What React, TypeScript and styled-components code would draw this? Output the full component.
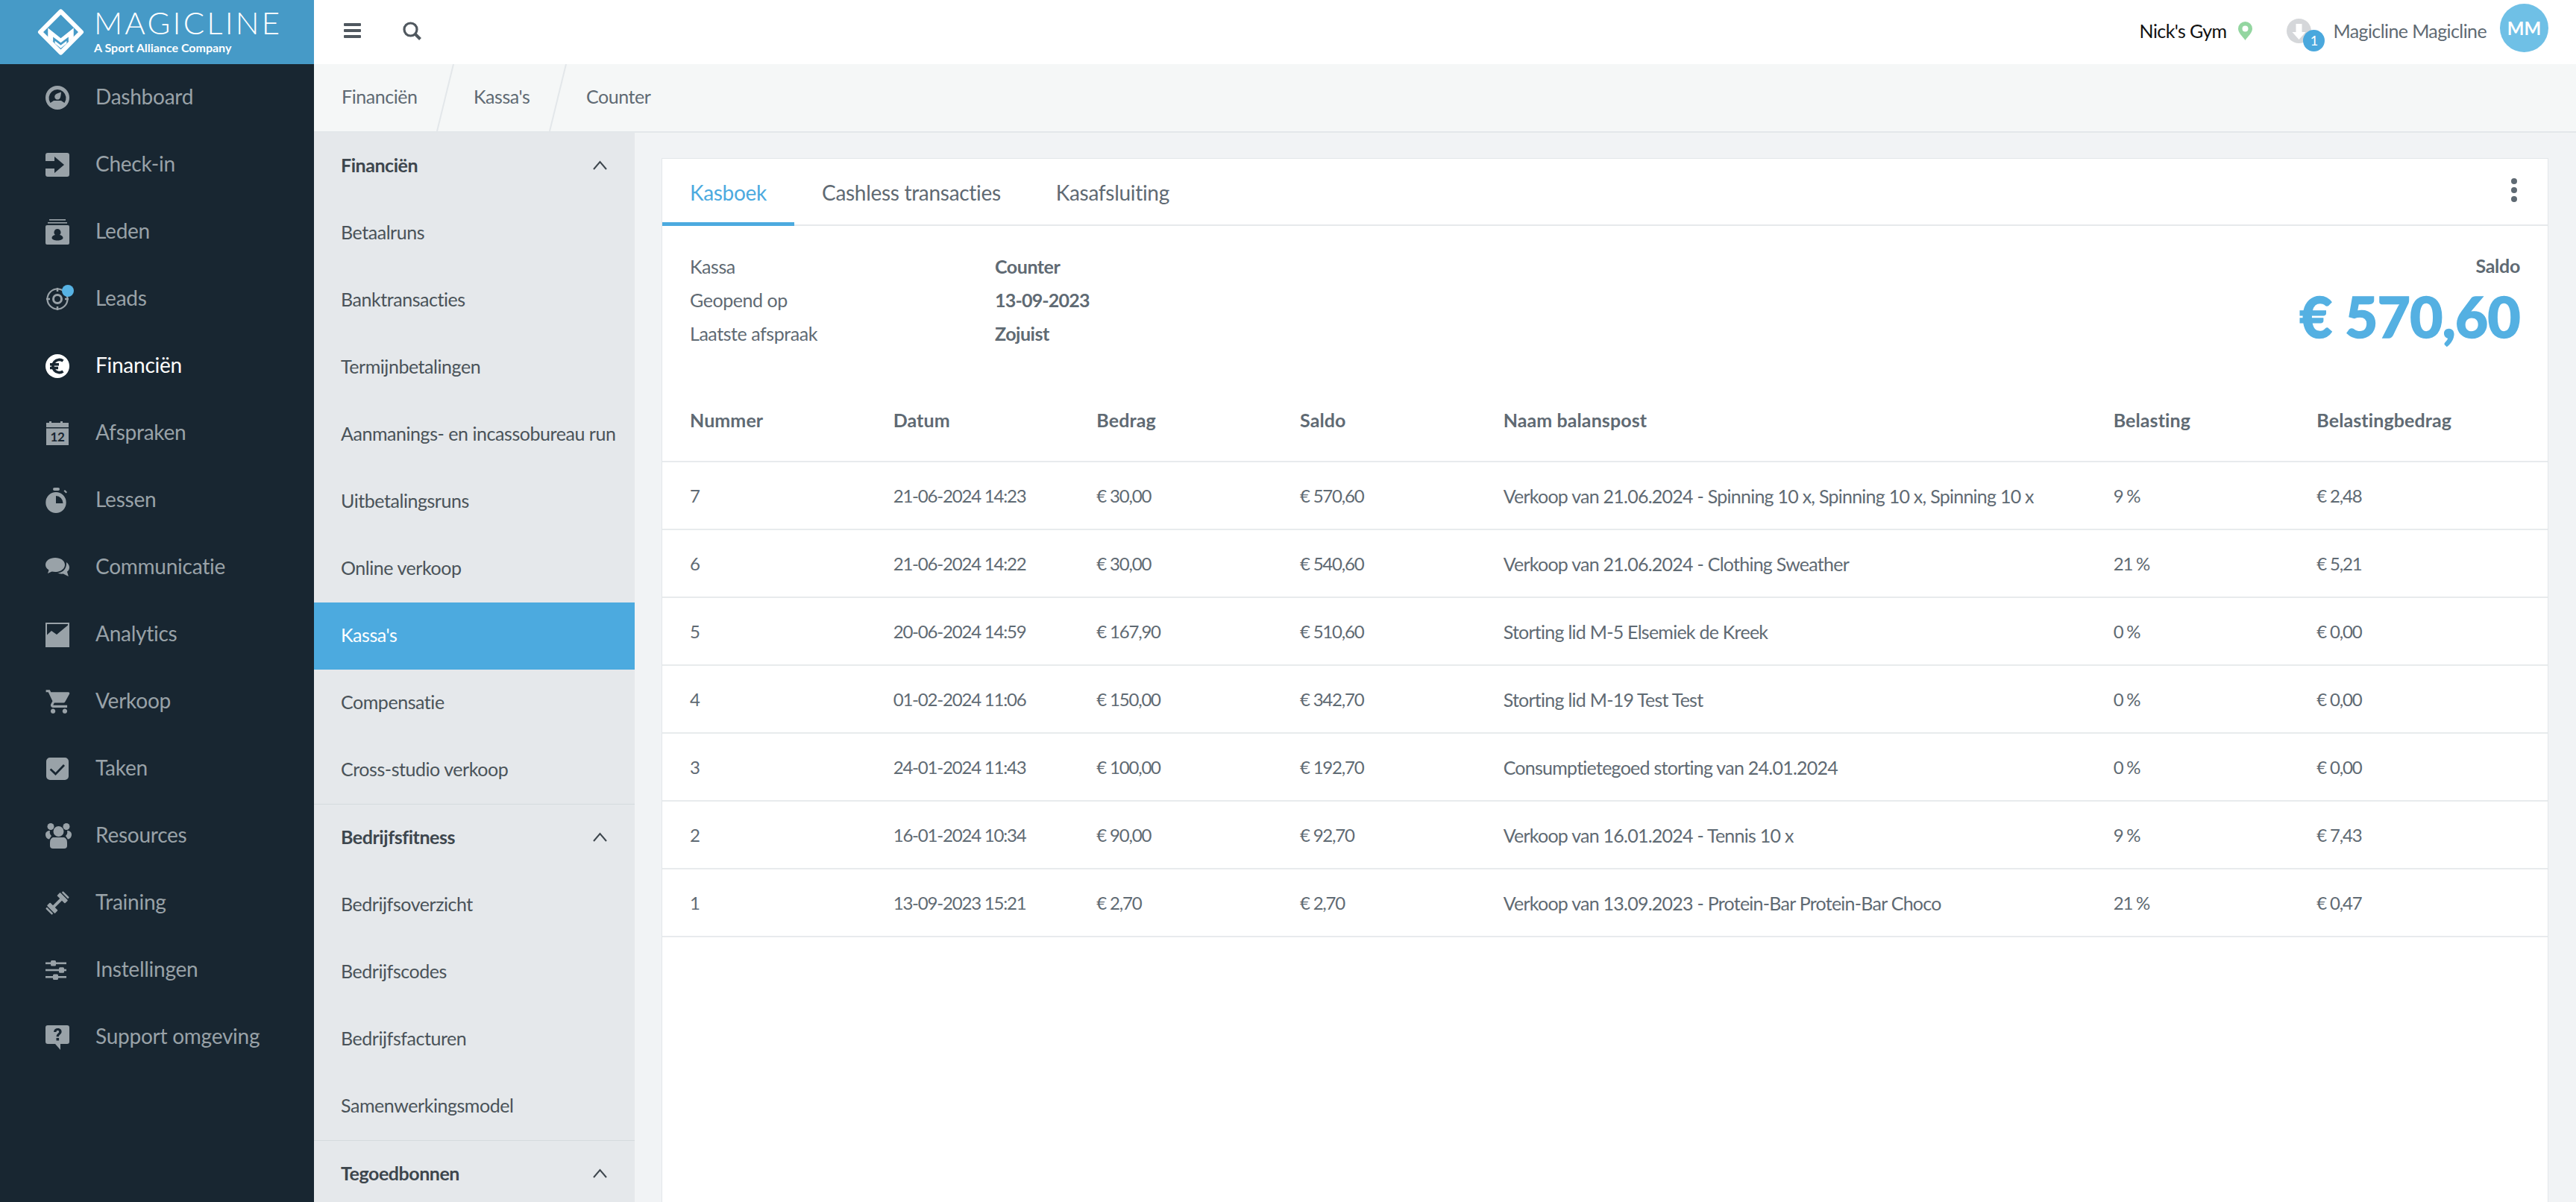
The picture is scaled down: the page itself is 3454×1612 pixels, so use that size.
import React from "react";
import styled, { createGlobalStyle } from "styled-components";
import { MdShoppingCart } from "react-icons/md";

const Global = createGlobalStyle`
  html, body { margin: 0; padding: 0; height: 100%; background: #f1f3f5; }
  #root { height: 100%; }
  * { box-sizing: border-box; }
  body { font-family: "Lato", "Noto Sans", sans-serif; overflow: hidden; }
`;

const Shell = styled.div`
  display: grid;
  grid-template-columns: 421px 1fr;
  width: 3454px;
  height: 1612px;
  overflow: hidden;
`;
const Side = styled.aside`
  background: #182631;
  display: flex;
  flex-direction: column;
`;
const Brand = styled.div`
  height: 86px;
  background: #469ac7;
  display: flex;
  align-items: center;
  padding-left: 50px;
  gap: 13px;
  color: #fff;
`;
const BrandText = styled.div`
  display: flex;
  flex-direction: column;
  line-height: 1;
`;
const BrandName = styled.span`
  font-size: 42px;
  font-weight: 300;
  letter-spacing: 3.2px;
  line-height: 42px;
  margin-top: -3px;
`;
const BrandSub = styled.span`
  font-size: 16px;
  font-weight: 700;
  line-height: 20px;
  margin-top: 3px;
`;
const Nav = styled.nav`
  display: flex;
  flex-direction: column;
`;
const NavItem = styled.a<{ $on?: boolean }>`
  height: 90px;
  display: flex;
  align-items: center;
  padding-left: 61px;
  gap: 35px;
  font-size: 28px;
  letter-spacing: -0.25px;
  color: ${(p) => (p.$on ? "#ffffff" : "#99a2a8")};
`;
const NavLabel = styled.span`
  margin-bottom: 4px;
`;
const NavIcon = styled.span`
  position: relative;
  width: 32px;
  height: 34px;
  display: flex;
  align-items: center;
  justify-content: center;
  svg { display: block; width: 32px; height: 34px; flex: none; }
`;
const WideSvg = styled.svg`
  && { width: 35px; margin-left: 3px; }
`;
const Cart = styled(MdShoppingCart)`
  && { width: 38px; height: 38px; margin-left: 3px; }
`;
const Dot = styled.span`
  position: absolute;
  width: 16px;
  height: 16px;
  border-radius: 50%;
  background: #57b3e4;
  top: -2px;
  right: -6px;
`;
const Main = styled.div`
  display: flex;
  flex-direction: column;
  min-width: 0;
`;
const Top = styled.header`
  height: 86px;
  background: #fff;
  display: flex;
  align-items: center;
  padding: 0 37px 4px 40px;
`;
const TopBtn = styled.span`
  display: flex;
  color: #50585f;
  margin-right: 56px;
  svg { display: block; }
`;
const Gym = styled.span`
  margin-left: auto;
  font-size: 25px;
  letter-spacing: -0.6px;
  color: #111;
`;
const Pin = styled.span`
  display: flex;
  margin: 0 46px 0 16px;
`;
const Download = styled.span`
  position: relative;
  width: 33px;
  height: 33px;
  margin-right: 29px;
  svg { display: block; }
`;
const Badge = styled.span`
  position: absolute;
  left: 22px;
  top: 15px;
  width: 29px;
  height: 29px;
  border-radius: 50%;
  background: #4aa8dd;
  color: #fff;
  font-size: 18px;
  display: flex;
  align-items: center;
  justify-content: center;
`;
const UserName = styled.span`
  font-size: 25px;
  letter-spacing: -0.6px;
  color: #5f6a73;
`;
const Avatar = styled.span`
  width: 65px;
  height: 65px;
  border-radius: 50%;
  background: #6fc0e6;
  color: #fff;
  font-weight: 700;
  font-size: 24px;
  display: flex;
  align-items: center;
  justify-content: center;
  margin: -8px 0 0 18px;
`;
const Crumbs = styled.div`
  height: 92px;
  background: #f5f7f7;
  border-bottom: 2px solid #e3e7ea;
  display: flex;
  align-items: center;
  font-size: 25px;
  letter-spacing: -0.45px;
  color: #5f6a73;
`;
const Crumb = styled.span<{ $w: number; $last?: boolean }>`
  position: relative;
  width: ${(p) => p.$w}px;
  padding: 0 0 4px 37px;
  height: 100%;
  display: flex;
  align-items: center;
  svg {
    position: absolute;
    right: -12px;
    top: 0;
    display: ${(p) => (p.$last ? "none" : "block")};
  }
`;
const Body = styled.div`
  flex: 1;
  display: flex;
  min-height: 0;
`;
const Sub = styled.div`
  width: 430px;
  background: #e5e8eb;
  overflow: hidden;
  flex: none;
`;
const SubGroup = styled.div`
  border-bottom: 1px solid #d5dadd;
`;
const SubHead = styled.div`
  height: 90px;
  padding: 0 37px 4px 36px;
  display: flex;
  align-items: center;
  justify-content: space-between;
  font-size: 25px;
  font-weight: 700;
  letter-spacing: -0.45px;
  color: #3d464d;
`;
const SubItem = styled.div<{ $on?: boolean }>`
  height: 90px;
  padding: 0 0 4px 36px;
  display: flex;
  align-items: center;
  font-size: 25px;
  letter-spacing: -0.45px;
  white-space: nowrap;
  color: ${(p) => (p.$on ? "#fff" : "#4a5359")};
  background: ${(p) => (p.$on ? "#4caadf" : "transparent")};
`;
const Content = styled.main`
  flex: 1;
  padding: 34px 37px 0 36px;
  min-width: 0;
`;
const Card = styled.section`
  background: #fff;
  border: 1px solid #e3e7ea;
  border-bottom: 0;
  height: 100%;
`;
const Tabs = styled.div`
  height: 90px;
  border-bottom: 2px solid #e6e9ec;
  display: flex;
  align-items: stretch;
  position: relative;
`;
const Tab = styled.a<{ $on?: boolean }>`
  padding: 5px 37px 0;
  display: flex;
  align-items: center;
  font-size: 28px;
  letter-spacing: -0.3px;
  color: ${(p) => (p.$on ? "#4caadf" : "#5f6a73")};
  margin-bottom: -2px;
  border-bottom: 5px solid ${(p) => (p.$on ? "#4caadf" : "transparent")};
`;
const Kebab = styled.span`
  position: absolute;
  right: 41px;
  top: 26px;
  display: flex;
  flex-direction: column;
  gap: 4px;
  i {
    display: block;
    width: 8px;
    height: 8px;
    border-radius: 50%;
    background: #5f6a73;
  }
`;
const Summary = styled.div`
  display: flex;
  justify-content: space-between;
  padding: 31px 37px 0;
  height: 205px;
`;
const Facts = styled.dl`
  margin: 0;
  display: grid;
  grid-template-columns: 409px auto;
  grid-auto-rows: 45px;
  align-items: center;
  font-size: 25px;
  letter-spacing: -0.45px;
  color: #5f6a73;
  dt { font-weight: 400; }
  dd { margin: 0; font-weight: 700; }
`;
const FactNumber = styled.dd`
  && { letter-spacing: -0.8px; }
`;
const Balance = styled.div`
  text-align: right;
  color: #5f6a73;
  font-size: 25px;
  font-weight: 700;
  letter-spacing: -0.3px;
  line-height: 45px;
`;
const Amount = styled.div`
  font-size: 76px;
  line-height: 90px;
  font-weight: 900;
  letter-spacing: -0.6px;
  color: #54b0e2;
  -webkit-text-stroke: 1.5px #54b0e2;
`;
const Row = styled.div<{ $head?: boolean }>`
  display: grid;
  grid-template-columns: 1fr 1fr 1fr 1fr 3fr 1fr 1fr;
  padding: 0 37px;
  align-items: center;
  height: ${(p) => (p.$head ? "112px" : "91px")};
  border-bottom: 2px solid #e8ebed;
  font-size: 25px;
  letter-spacing: ${(p) => (p.$head ? "0.1px" : "-0.75px")};
  font-weight: ${(p) => (p.$head ? 700 : 400)};
  color: #5f6a73;
  white-space: nowrap;
`;
const NumCell = styled.span`
  font-size: 24px;
  letter-spacing: -1.2px;
`;

const Dashboard = () => (
  <svg viewBox="0 0 32 34" fill="currentColor">
    <circle cx="16" cy="17" r="16" />
    <path fill="#182631" d="M6.500 24A11.500 11.500 0 1 1 25.500 24L21 21H11z" />
    <path d="M21 9.500c-.2 3.500-.6 5.500-1.200 7.500a3.900 3.900 0 1 1-6.300-4.200C15.200 11.400 18 10.500 21 9.500z" />
  </svg>
);
const CheckIn = () => (
  <svg viewBox="0 0 32 34" fill="currentColor">
    <path d="M3 1h26a3 3 0 0 1 3 3v26a3 3 0 0 1-3 3H3a3 3 0 0 1-3-3v-8h12v6l13-11L12 6v6H0V4a3 3 0 0 1 3-3z" />
  </svg>
);
const Members = () => (
  <svg viewBox="0 0 32 34" fill="currentColor">
    <rect x="5" y="0" width="22" height="1.600" />
    <rect x="3" y="4" width="26" height="1.600" />
    <path fillRule="evenodd" d="M2 8h28a2 2 0 0 1 2 2v22a2 2 0 0 1-2 2H2a2 2 0 0 1-2-2V10a2 2 0 0 1 2-2zM16 13a4.600 4.600 0 0 0-3 8c-2.500.6-4.500 2-4.500 4 0 2.200 3.500 3.500 7.500 3.500s7.500-1.300 7.500-3.500c0-2-2-3.400-4.500-4a4.600 4.600 0 0 0-3-8z" />
  </svg>
);
const Leads = () => (
  <svg viewBox="0 0 32 34" fill="none" stroke="currentColor">
    <circle cx="16" cy="17" r="13.500" strokeWidth="2.200" />
    <circle cx="16" cy="17" r="5.500" strokeWidth="3" />
    <path strokeWidth="2.500" d="M16 2v5M16 27v5M1 17h5M26 17h5" />
  </svg>
);
const Euro = () => (
  <svg viewBox="0 0 32 34">
    <circle cx="16" cy="17" r="16" fill="#fff" />
    <path fill="none" stroke="#182631" strokeWidth="3.600" d="M23.500 10a8.600 8.600 0 1 0 0 14M6 14.800h12M6 19.500h11" />
  </svg>
);
const Calendar = () => (
  <svg viewBox="0 0 32 34" fill="currentColor">
    <path fillRule="evenodd" d="M1 3h4V1h3v2h12V1h3v2h8v30H1zM1 9v1.600h30V9z" />
    <text x="16" y="28" textAnchor="middle" fontSize="17" fontWeight="700" fontFamily="Lato, sans-serif" fill="#182631">12</text>
  </svg>
);
const Stopwatch = () => (
  <svg viewBox="0 0 32 34" fill="currentColor">
    <rect x="10" y="0" width="9" height="4" rx="2" />
    <path d="M26 3l3 3-1.500 1.500-3-3z" />
    <path fillRule="evenodd" d="M14 6a13.700 14 0 1 1 0 28 13.700 14 0 0 1 0-28zM14 11v10h9.500A9.600 10 0 0 0 14 11z" />
  </svg>
);
const Chat = () => (
  <svg viewBox="0 0 32 34" fill="currentColor">
    <path d="M13 4c7 0 13 3.800 13 9.500 0 5.500-6 9.500-13 9.500-1.500 0-3-.2-4.500-.5L3 25l1.500-4.500C2 18.800 0 16.500 0 13.500 0 7.800 6 4 13 4z" />
    <path d="M28 10c2.600 2 4 4 4 7 0 2.400-1.200 4.300-3 5.700l1.800 6.300-7-3.400c-2.500.3-5.300 0-8-1 6-.4 13-4.500 12.200-14.600z" />
  </svg>
);
const Chart = () => (
  <svg viewBox="0 0 32 34" fill="currentColor">
    <path fillRule="evenodd" d="M0 1h32v33H0zM2 3v14.500l6-5.500 7 5L30 4.500V3z" />
  </svg>
);
const CheckBox = () => (
  <svg viewBox="0 0 32 34" fill="currentColor">
    <path fillRule="evenodd" d="M6 2h20a5 5 0 0 1 5 5v20a5 5 0 0 1-5 5H6a5 5 0 0 1-5-5V7a5 5 0 0 1 5-5zM24 11l-10.500 11-6-5.500-1.800 2 7.800 7.500L26 13z" />
  </svg>
);
const People = () => (
  <WideSvg viewBox="0 0 35 34" fill="currentColor">
    <circle cx="7" cy="4.500" r="4.500" />
    <circle cx="28" cy="4.500" r="4.500" />
    <path d="M6 10a7 7 0 0 0 2 7l-3 4.500C2 21 0 18.500 0 15c0-3 2.500-5 6-5zM29 10a7 7 0 0 1-2 7l3 4.500c3-.5 5-3 5-6.500 0-3-2.500-5-6-5z" />
    <circle cx="17.500" cy="11" r="7" />
    <path d="M10 19h15c2.500 1 4 3 4 7v4a4 4 0 0 1-4 4H10a4 4 0 0 1-4-4v-4c0-4 1.500-6 4-7z" />
  </WideSvg>
);
const Dumbbell = () => (
  <svg viewBox="0 0 32 34" fill="currentColor">
    <g transform="translate(16 17) rotate(-45)">
      <rect x="-8" y="-2" width="16" height="4" />
      <rect x="6.500" y="-7.500" width="6" height="15" rx="1" />
      <rect x="14" y="-6" width="2.500" height="12" rx="1" />
      <rect x="-12.500" y="-7.500" width="6" height="15" rx="1" />
      <rect x="-16.500" y="-6" width="2.500" height="12" rx="1" />
    </g>
  </svg>
);
const Sliders = () => (
  <svg viewBox="0 0 32 34" fill="currentColor">
    <rect x="0" y="6.500" width="28" height="2.600" />
    <rect x="0" y="15.700" width="28" height="2.600" />
    <rect x="0" y="25" width="28" height="2.600" />
    <rect x="7" y="4" width="7" height="7.500" rx="1.500" />
    <rect x="18" y="13.300" width="7" height="7.500" rx="1.500" />
    <rect x="10" y="22.500" width="7" height="7.500" rx="1.500" />
  </svg>
);
const Help = () => (
  <svg viewBox="0 0 32 34" fill="currentColor">
    <path fillRule="evenodd" d="M3 1h26a3 3 0 0 1 3 3v19a3 3 0 0 1-3 3H20v8l-7-8H3a3 3 0 0 1-3-3V4a3 3 0 0 1 3-3zM11 10h3.400c.2-1.400 1-2 2-2s1.800.7 1.800 1.700c0 2-3.600 2.300-3.600 6.600h3.200c0-2.800 3.800-3.200 3.800-6.900 0-2.700-2.200-4.400-5.100-4.400-3 0-5.200 1.700-5.500 5zM14.500 18h3.600v3.400h-3.600z" />
  </svg>
);
const Chevron = () => (
  <svg width="19" height="13" viewBox="0 0 19 13" fill="none" stroke="#3d464d" strokeWidth="2">
    <path d="M1 12l8.500-10L18 12" />
  </svg>
);
const Slash = () => (
  <svg width="26" height="90" viewBox="0 0 26 90" fill="none" stroke="#e3e7ea" strokeWidth="2">
    <path d="M24 0L2 90" />
  </svg>
);

const nav = [
  ["Dashboard", <Dashboard />],
  ["Check-in", <CheckIn />],
  ["Leden", <Members />],
  ["Leads", <Leads />],
  ["Financiën", <Euro />],
  ["Afspraken", <Calendar />],
  ["Lessen", <Stopwatch />],
  ["Communicatie", <Chat />],
  ["Analytics", <Chart />],
  ["Verkoop", <Cart />],
  ["Taken", <CheckBox />],
  ["Resources", <People />],
  ["Training", <Dumbbell />],
  ["Instellingen", <Sliders />],
  ["Support omgeving", <Help />],
] as const;

const groups = [
  {
    title: "Financiën",
    items: ["Betaalruns", "Banktransacties", "Termijnbetalingen", "Aanmanings- en incassobureau run", "Uitbetalingsruns", "Online verkoop", "Kassa's", "Compensatie", "Cross-studio verkoop"],
  },
  { title: "Bedrijfsfitness", items: ["Bedrijfsoverzicht", "Bedrijfscodes", "Bedrijfsfacturen", "Samenwerkingsmodel"] },
  { title: "Tegoedbonnen", items: [] as string[] },
];

const head = ["Nummer", "Datum", "Bedrag", "Saldo", "Naam balanspost", "Belasting", "Belastingbedrag"];
const rows = [
  ["7", "21-06-2024 14:23", "€ 30,00", "€ 570,60", "Verkoop van 21.06.2024 - Spinning 10 x, Spinning 10 x, Spinning 10 x", "9 %", "€ 2,48"],
  ["6", "21-06-2024 14:22", "€ 30,00", "€ 540,60", "Verkoop van 21.06.2024 - Clothing Sweather", "21 %", "€ 5,21"],
  ["5", "20-06-2024 14:59", "€ 167,90", "€ 510,60", "Storting lid M-5 Elsemiek de Kreek", "0 %", "€ 0,00"],
  ["4", "01-02-2024 11:06", "€ 150,00", "€ 342,70", "Storting lid M-19 Test Test", "0 %", "€ 0,00"],
  ["3", "24-01-2024 11:43", "€ 100,00", "€ 192,70", "Consumptietegoed storting van 24.01.2024", "0 %", "€ 0,00"],
  ["2", "16-01-2024 10:34", "€ 90,00", "€ 92,70", "Verkoop van 16.01.2024 - Tennis 10 x", "9 %", "€ 7,43"],
  ["1", "13-09-2023 15:21", "€ 2,70", "€ 2,70", "Verkoop van 13.09.2023 - Protein-Bar Protein-Bar Choco", "21 %", "€ 0,47"],
];

export default function App() {
  return (
    <>
      <Global />
      <Shell>
        <Side>
          <Brand>
            <svg width="63" height="64" viewBox="0 0 64 64" fill="none">
              <path d="M32 4L60 32 32 60 4 32z" stroke="#fff" strokeWidth="6" strokeLinejoin="round" />
              <path fill="#fff" d="M14.500 26.500L32 40.500 49.500 26.500 49.500 39 42.500 45.500 42.500 38.500 32 46.500 21.500 38.500 21.500 45.500 14.500 39z" />
              <path fill="#fff" d="M24 44L32 50 40 44V47.500L32 54 24 47.500z" />
            </svg>
            <BrandText>
              <BrandName>MAGICLINE</BrandName>
              <BrandSub>A Sport Alliance Company</BrandSub>
            </BrandText>
          </Brand>
          <Nav>
            {nav.map(([label, icon]) => (
              <NavItem key={label} $on={label === "Financiën"}>
                <NavIcon>
                  {icon}
                  {label === "Leads" && <Dot />}
                </NavIcon>
                <NavLabel>{label}</NavLabel>
              </NavItem>
            ))}
          </Nav>
        </Side>
        <Main>
          <Top>
            <TopBtn>
              <svg width="23" height="20" viewBox="0 0 23 20" fill="currentColor">
                <rect width="23" height="4" rx="1" />
                <rect y="8" width="23" height="4" rx="1" />
                <rect y="16" width="23" height="4" rx="1" />
              </svg>
            </TopBtn>
            <TopBtn>
              <svg width="25" height="25" viewBox="0 0 25 25" fill="none" stroke="currentColor" strokeWidth="3.200">
                <circle cx="10.500" cy="10.500" r="8.500" />
                <path d="M16.500 16.500L23.500 23.500" strokeWidth="4" />
              </svg>
            </TopBtn>
            <Gym>Nick's Gym</Gym>
            <Pin>
              <svg width="19" height="25" viewBox="0 0 19 25" fill="#93d6a0">
                <path fillRule="evenodd" d="M9.500 0A9.500 9.500 0 0 1 19 9.500C19 15 13 20 9.500 25 6 20 0 15 0 9.500A9.500 9.500 0 0 1 9.500 0zM9.500 5.500a4 4 0 1 0 0 8 4 4 0 0 0 0-8z" />
              </svg>
            </Pin>
            <Download>
              <svg width="33" height="33" viewBox="0 0 33 33">
                <circle cx="16.500" cy="16.500" r="16.500" fill="#d5d7da" />
                <path fill="#fff" d="M12.500 7h8v11h5L16.500 28 7.500 18h5z" />
              </svg>
              <Badge>1</Badge>
            </Download>
            <UserName>Magicline Magicline</UserName>
            <Avatar>MM</Avatar>
          </Top>
          <Crumbs>
            <Crumb $w={177}>
              Financiën
              <Slash />
            </Crumb>
            <Crumb $w={151}>
              Kassa's
              <Slash />
            </Crumb>
            <Crumb $w={200} $last>
              Counter
            </Crumb>
          </Crumbs>
          <Body>
            <Sub>
              {groups.map((g) => (
                <SubGroup key={g.title}>
                  <SubHead>
                    {g.title}
                    <Chevron />
                  </SubHead>
                  {g.items.map((i) => (
                    <SubItem key={i} $on={i === "Kassa's"}>
                      {i}
                    </SubItem>
                  ))}
                </SubGroup>
              ))}
            </Sub>
            <Content>
              <Card>
                <Tabs>
                  <Tab $on>Kasboek</Tab>
                  <Tab>Cashless transacties</Tab>
                  <Tab>Kasafsluiting</Tab>
                  <Kebab>
                    <i />
                    <i />
                    <i />
                  </Kebab>
                </Tabs>
                <Summary>
                  <Facts>
                    <dt>Kassa</dt>
                    <dd>Counter</dd>
                    <dt>Geopend op</dt>
                    <FactNumber>13-09-2023</FactNumber>
                    <dt>Laatste afspraak</dt>
                    <dd>Zojuist</dd>
                  </Facts>
                  <Balance>
                    Saldo
                    <Amount>€ 570,60</Amount>
                  </Balance>
                </Summary>
                <Row $head>
                  {head.map((h) => (
                    <span key={h}>{h}</span>
                  ))}
                </Row>
                {rows.map((r) => (
                  <Row key={r[0]}>
                    {r.map((c, i) => (i === 4 ? <span key={i}>{c}</span> : <NumCell key={i}>{c}</NumCell>))}
                  </Row>
                ))}
              </Card>
            </Content>
          </Body>
        </Main>
      </Shell>
    </>
  );
}
